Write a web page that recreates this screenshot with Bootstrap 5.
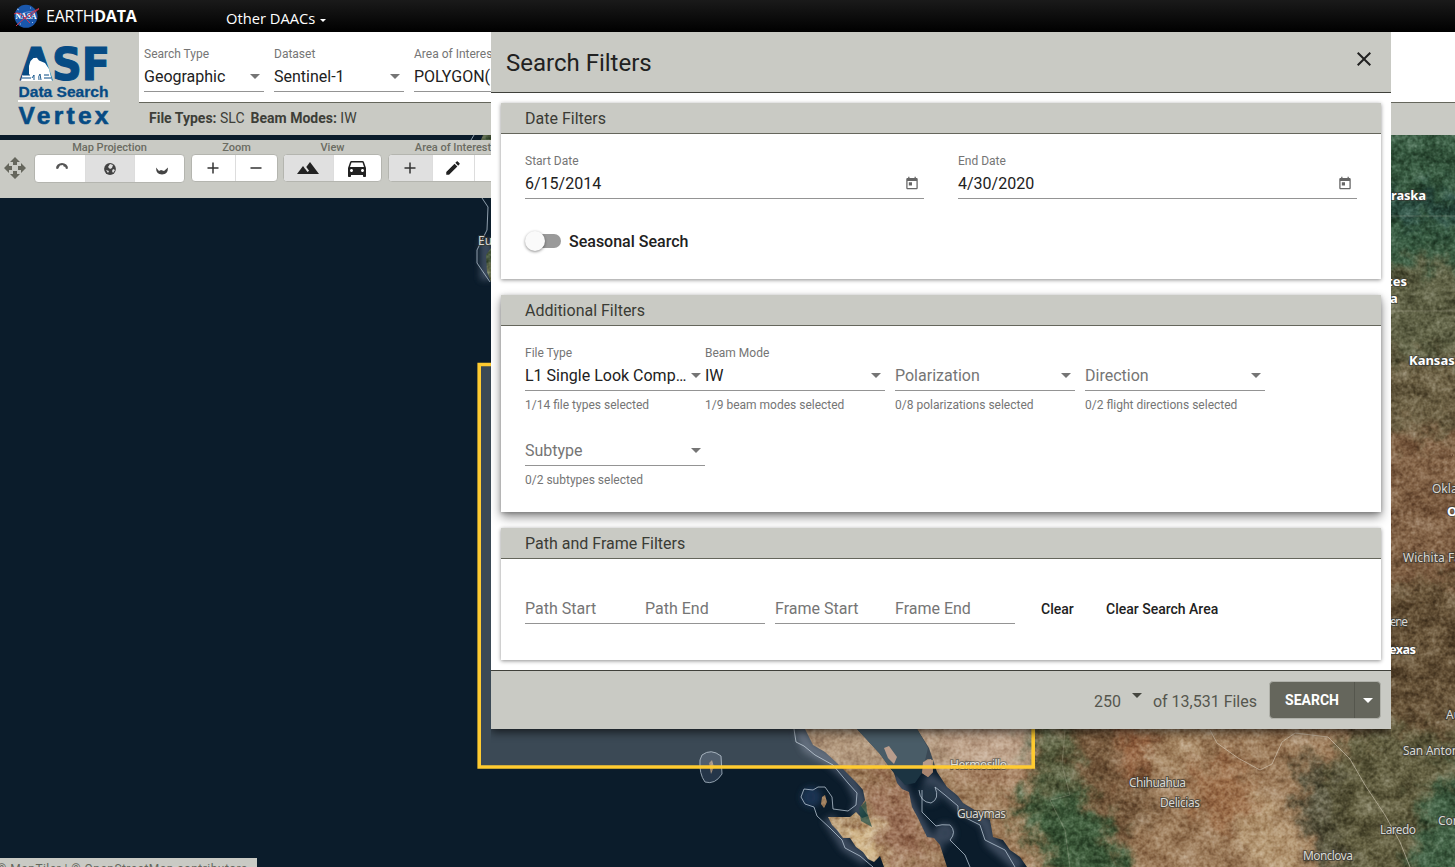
<!DOCTYPE html>
<html lang="en">
<head>
<meta charset="utf-8">
<title>ASF Data Search Vertex</title>
<meta name="viewport" content="width=device-width, initial-scale=1">
<link rel="stylesheet" href="https://cdn.jsdelivr.net/npm/bootstrap@5.3.0/dist/css/bootstrap.min.css">
<style>
:root{--stone:#c9cac4;--olive:#65665c}
body{font-family:Roboto,"Liberation Sans",sans-serif;font-size:16px;color:#212121;height:867px;overflow:hidden;background:#0b1c2b}
.app-shell{height:867px;overflow:hidden}
.topbar{height:32px;background:linear-gradient(#1a1a1a,#000);font-family:"Open Sans",sans-serif;color:#fff}
.brand-name{font-size:16px;line-height:32px;letter-spacing:-.25px;margin-left:7px;font-family:"Open Sans",sans-serif;width:180px}
.daacs{font-size:14.700px;line-height:37px;padding-top:5px}
.head{height:103px;background:var(--stone)}
.logo-box{width:139px}
.search-row{height:71px;background:#fff;border-bottom:1px solid #65665c;padding:13px 0 0 5px}
.summary{font-size:14px;line-height:31px;color:#3d3e38;padding-left:10px}
.fld-label{font-size:12px;line-height:18px;height:16px;color:#757575;white-space:nowrap}
.fld-value{height:31px;line-height:31px;border-bottom:1px solid #949494;white-space:nowrap}
.fld-hint{font-size:12px;line-height:28px;color:#757575;white-space:nowrap}
.w120{width:120px}.w130{width:130px}.w180{width:180px}
.tri{width:0;height:0;border:5px solid transparent;border-top-color:#757575;border-bottom:0;flex:none}
.stage{height:732px}
.map{position:absolute;inset:0;width:1455px;height:732px}
.map text{font-family:"Noto Sans",sans-serif;font-size:12px;fill:#d8d8d4;stroke:#3a3a34;stroke-width:2px;stroke-opacity:.7;paint-order:stroke}
.map .state{font-weight:700;font-size:13px;fill:#fff}
.tools{top:5px;height:58px;background:var(--stone);width:900px}
.tool-title{font-size:11px;line-height:16px;height:14px;font-weight:500;color:#6b6c62;text-align:center}
.tool-group{border:1px solid #b4b5af;border-radius:4px;background:#fff;height:28px;overflow:hidden}
.tool-group>span{display:flex;align-items:center;justify-content:center;border-left:1px solid #ddd;color:#222}
.tool-group>span:first-child{border-left:0}
.tool-group .on{background:#e0e0e0}
.credit{bottom:0;left:0;height:9px;width:257px;background:var(--stone);font-size:12px;line-height:23px;color:#65665c;overflow:hidden;white-space:nowrap;text-indent:-3px;letter-spacing:.45px}
.panel{left:491px;top:32px;width:900px;height:697px;background:#fff;box-shadow:0 3px 9px rgba(0,0,0,.65);clip-path:inset(0 0 -14px 0);z-index:5}
.panel-top{height:61px;background:var(--stone);border-bottom:1px solid #40413b;padding:1px 15px 0;font-size:24px}
.panel-body{height:577px;padding:10px 10px 0}
.sheet{background:#fff;box-shadow:0 1px 4px rgba(0,0,0,.45);margin-bottom:16px}
.sheet-raised{box-shadow:0 5px 10px rgba(0,0,0,.45),0 1px 4px rgba(0,0,0,.25)}
.sheet-title{height:31px;line-height:31px;background:var(--stone);border-bottom:1px solid #65665c;padding-left:24px;color:#3a3b35}
.sheet-body{padding:18px 24px 0}
.panel-foot{height:59px;background:var(--stone);border-top:1px solid #40413b;color:#55564e}
.toggle{width:36px;height:20px;margin-top:-2px}
.toggle i{position:absolute;left:3px;top:3px;width:33px;height:14px;border-radius:7px;background:#9a9a9a}
.toggle b{position:absolute;left:0;top:0;width:20px;height:20px;border-radius:50%;background:#fafafa;box-shadow:0 1px 3px rgba(0,0,0,.45)}
.muted{color:#757575}
.go{height:38px;width:112px;background:var(--olive);border-radius:4px;border:1px solid #b0b1aa;color:#fff;overflow:hidden}
.go-text{width:85px;font-size:14px;font-weight:700;text-align:center;line-height:36px;border-right:1px solid #55564d}
.flat{font-size:14px;font-weight:500;line-height:33px;white-space:nowrap}
</style>
<script src="https://cdn.jsdelivr.net/npm/bootstrap@5.3.0/dist/js/bootstrap.bundle.min.js"></script>
</head>
<body>
<div class="app-shell position-relative">
<nav class="topbar d-flex">
  <svg width="30" height="32" style="margin-left:9px" viewBox="9 0 30 32"><circle cx="26" cy="16.3" r="11.5" fill="#1a57ab"/><path d="M17 9l2 1M32 22l1 1M20 24h1M30 8h1" stroke="#9cc0ee"/><path d="M16 19q7-9 18-7" stroke="#6d9ada" fill="none" stroke-width=".8"/><text x="15.5" y="19.2" font-family="Liberation Serif,serif" font-weight="700" font-size="8.5" textLength="21" lengthAdjust="spacingAndGlyphs" fill="#fff">NASA</text><path d="M16 26q5-5 9-8 7-7 15-10-7 5-11 10M14 14q5-3 10 3l6 6" stroke="#d6354a" stroke-width="1" fill="none"/></svg>
  <span class="brand-name">EARTH<b>DATA</b></span>
  <span class="daacs d-flex align-items-center">Other DAACs <svg width="8" height="6" class="ms-1 mt-1"><path d="M1 1h6L4 4z" fill="#fff"/></svg></span>
</nav>
<header class="head d-flex">
  <div class="logo-box flex-shrink-0">
    <svg width="139" height="103" viewBox="0 32 139 103"><g font-family="DejaVu Sans,sans-serif" font-weight="700" fill="#064b84">
      <text x="20" y="80" font-size="45" stroke="#064b84" stroke-width="1.200" textLength="90" lengthAdjust="spacingAndGlyphs">ASF</text>
      <path d="M21 81l1.500-6H29V66l1.500-5 3-3 3.500 0 2 2.500 6 2.500 4 6 3 12z" fill="#fff"/><path d="M23 75h7M22 78h9M44 75h5M44 78h7" stroke="#064b84" stroke-width="1"/><path d="M34 80v-5l-2 3M39 80q-1-4 1-6l1 6" stroke="#064b84" fill="none" stroke-width=".9"/>
      <g font-family="Liberation Sans,sans-serif"><text x="18.500" y="97" font-size="14.500" stroke="#064b84" stroke-width=".3" textLength="90" lengthAdjust="spacingAndGlyphs">Data Search</text></g>
      <path d="M18 101h92" stroke="#fff" stroke-width="1.800"/>
      <text x="18.500" y="123.500" font-size="24.500" textLength="90" lengthAdjust="spacing" font-family="Liberation Sans,sans-serif" stroke="#064b84" stroke-width=".6">Vertex</text></g></svg>
  </div>
  <div class="flex-grow-1">
    <div class="search-row d-flex">
      <div class="w120 flex-shrink-0" style="margin-right:10px"><div class="fld-label">Search Type</div><div class="fld-value d-flex align-items-center justify-content-between pe-1">Geographic<i class="tri"></i></div></div>
      <div class="w130 flex-shrink-0" style="margin-right:10px"><div class="fld-label">Dataset</div><div class="fld-value d-flex align-items-center justify-content-between pe-1">Sentinel-1<i class="tri"></i></div></div>
      <div class="w180 flex-shrink-0"><div class="fld-label">Area of Interest</div><div class="fld-value overflow-hidden">POLYGON(</div></div>
    </div>
    <div class="summary"><b>File Types:</b> SLC<b style="margin-left:6px">Beam Modes:</b> IW</div>
  </div>
</header>

<main class="stage position-relative">
  <svg class="map" viewBox="0 135 1455 732">
    <defs>
      <filter id="terrain" x="0" y="0" width="1" height="1" color-interpolation-filters="sRGB"><feTurbulence type="fractalNoise" baseFrequency=".045 .06" numOctaves="7" seed="21"/><feColorMatrix values="1.2 .5 0 0 -.42  1.2 .5 0 0 -.42  1.2 .5 0 0 -.42  0 0 0 0 1"/></filter>
      <filter id="grain" x="0" y="0" width="1" height="1" color-interpolation-filters="sRGB"><feTurbulence type="fractalNoise" baseFrequency=".25" numOctaves="3" seed="5"/><feColorMatrix values="1.3 .5 0 0 -.42  1.3 .5 0 0 -.42  1.3 .5 0 0 -.42  0 0 0 0 1"/></filter>
      <filter id="rough" x="-40%" y="-40%" width="180%" height="180%" color-interpolation-filters="sRGB"><feGaussianBlur stdDeviation="9" result="b"/><feTurbulence type="fractalNoise" baseFrequency=".06" numOctaves="5" seed="3" result="n"/><feDisplacementMap in="b" in2="n" scale="45" xChannelSelector="R" yChannelSelector="G"/></filter>
      <filter id="glow" x="-30%" y="-30%" width="160%" height="160%"><feGaussianBlur stdDeviation="3"/></filter>
      <clipPath id="land"><path d="M805 729L813 745 825 752 837 763 846 772 857 783 863 790 865 800 861 806 868 816 862 818 856 812 850 817 828 817 832 825 837 830 843 838 850 838 856 847 863 852 868 859 874 862 880 856 884 867H947L940 845 934 838 927 837 918 818 912 807 909 792 902 789 897 783 894 773 890 768 880 754 857 729ZM884 748L889 746 897 757 894 764 888 758ZM917 729L924 740 929 748 933 760 933 772 928 777 922 773 923 762 928 759 933 760 937 772 947 787 958 796 963 803 978 812 990 820 993 837 1003 840 1010 850 1020 857 1027 867H1455V135H1385V729ZM822 797L825 795 827 802 824 808 821 804ZM709 763L712 760 714 767 711 774ZM486 255L491 248V282L487 272ZM483 135H491V140H481Z"/></clipPath>
    </defs>
    <rect y="135" width="1455" height="732" fill="#0b1c2b"/>
    <g fill="none" stroke="#48566a" stroke-width="12" opacity=".8" filter="url(#glow)"><path d="M800 730L808 748 830 760 850 778 861 800 856 816M828 818L846 846 867 860M895 775L914 815 926 836 940 852M926 778L945 790 961 805 986 823 991 842 1020 867"/><circle cx="811" cy="797" r="4" stroke="#233e62"/><circle cx="930" cy="794" r="5" stroke="#28384a"/><circle cx="945" cy="833" r="4"/><path d="M486 240V280"/></g>
    <g clip-path="url(#land)">
      <rect x="470" y="135" width="985" height="732" fill="#a38361"/>
      <g filter="url(#rough)">
        <path d="M1350 90H1500V280H1350z" fill="#3a5e44"/>
        <path d="M1350 196H1500V220H1350z" fill="#2b4f45"/>
        <path d="M1350 262H1500V365H1350Z" fill="#65674a"/><path d="M1350 360H1500V440H1350Z" fill="#716548"/><path d="M1350 435H1500V590H1350Z" fill="#87674a"/>
        <path d="M1350 580H1500V780H1350Z" fill="#6c583c"/>
        <path d="M1365 730H1500V890H1330L1310 780Z" fill="#676344"/><path d="M1425 790L1500 755V890H1410Z" fill="#456548"/>
        <path d="M1055 750L1085 790 1120 825 1130 890H1060L1035 835 1012 810Z" fill="#42603f"/>
        <path d="M1030 720L1070 720 1080 780 1040 810Z" fill="#5e6444"/>
        <path d="M1070 715H1150V820L1120 840 1085 800Z" fill="#7e6143"/>
        <path d="M1110 720L1140 715 1150 770 1130 790Z" fill="#9d6b48"/><path d="M1180 780L1240 755 1260 800 1220 835Z" fill="#a1744f"/>
        <path d="M1298 755L1335 770 1328 815 1350 867 1325 867 1300 820Z" fill="#5a5741"/>
        <path d="M1150 720L1215 720 1205 765 1160 775Z" fill="#ae906d"/><path d="M1250 790L1280 815 1310 880H1270L1240 840Z" fill="#bca17d"/>
        <path d="M830 810L858 818 880 835 885 880 855 860Z" fill="#dfc9a0"/><path d="M870 775L905 790 940 867H900L870 810Z" fill="#a37a60"/>
        <path d="M925 715H1025V790H965Z" fill="#b39274"/><path d="M480 235h20v60h-20z" fill="#35593d"/><path d="M470 120h30v25h-30z" fill="#35593d"/>
      </g>
      <rect x="470" y="135" width="985" height="732" filter="url(#terrain)" style="mix-blend-mode:soft-light" opacity=".55"/>
      <rect x="470" y="135" width="985" height="732" filter="url(#grain)" style="mix-blend-mode:soft-light" opacity=".5"/>
    </g>
    <path d="M852 729L857 729 880 754 890 768 905 785 915 783 922 773 928 748 917 729Z" fill="#1c3442"/><path d="M884 748L889 746 897 757 894 764 888 758ZM923 762L931 759 933 772 928 777 922 773Z" fill="#a88570"/>
    <path d="M859 808L866 801 867 812 872 827 861 821Z" fill="#245148" opacity=".7"/>
    <g fill="none" stroke="#bccbd8" stroke-width="1" opacity=".75"><path d="M794 729L796 742 804 746 815 755 833 765 848 783 857 793 856 805 848 811 833 809 832 797 825 787 818 787 813 790 804 789 801 797 805 804 814 807 817 816 830 828 842 840 845 848 860 856 873 867M919 790Q920 802 931 803 940 799 935 787L945 795 958 806 958 814 980 825 985 840 1005 850 1015 867M922 790L922 812 936 826Q941 824 950 825 957 832 950 840L965 855 970 867M482 198L488 207 487 230 477 250 477 263 490 282M471 140L474 135"/><path d="M702 755Q711 748 721 756L722 774Q715 785 705 782 699 774 700 760Z" fill="#8192b4" fill-opacity=".3"/></g>
    <g fill="none" stroke="#ddd4c4" stroke-width="1" opacity=".55"><path d="M1210 730L1217 743 1238 758 1260 770 1272 764 1282 742 1295 733 1328 737 1350 759 1365 785 1385 815 1400 842 1410 867"/><path d="M1065 730L1062 765 1070 795 1050 800 1065 830 1070 867M1391 216H1455M1391 311H1455" opacity=".4"/></g>
    <text x="950" y="769" textLength="57">Hermosillo</text>
    <path d="M479.200 364.500H1033.200V767H479.200Z" fill="#fff" fill-opacity=".2" stroke="#ffcb30" stroke-width="3.600"/>
    <text x="1391" y="199.500" class="state" textLength="35">raska</text><text x="1387" y="286" class="state">tes</text><text x="1390" y="303" class="state">a</text><text x="1409" y="365" class="state">Kansas</text>
    <text x="1432" y="493">Oklahoma</text><text x="1447" y="516" class="state">Oklahoma</text><text x="1403" y="562" textLength="70">Wichita Falls</text><text x="1390" y="626" textLength="18">ene</text><text x="1389" y="654" class="state" textLength="27">exas</text>
    <text x="1446" y="719">Austin</text><text x="1403" y="755" textLength="66">San Antonio</text><text x="1438" y="825">Corpus</text><text x="1380" y="834" textLength="36">Laredo</text><text x="1303" y="860" textLength="50">Monclova</text><text x="1129" y="787" textLength="57">Chihuahua</text><text x="1160" y="807" textLength="40">Delicias</text><text x="957" y="818" textLength="49">Guaymas</text><text x="478" y="245">Eureka</text>
  </svg>
  <div class="tools position-absolute start-0 d-flex">
    <svg width="22" height="22" class="flex-shrink-0" style="margin:17px 8px 0 4px" viewBox="0 0 22 22" fill="#65665c"><path d="M11 0l5 5h-3v3H9V5H6zM11 22l5-5h-3v-3H9v3H6zM0 11l5-5v3h3v4H5v3zM22 11l-5-5v3h-3v4h3v3z"/></svg>
    <div style="width:151px;margin-right:6px"><div class="tool-title">Map Projection</div>
      <div class="tool-group d-flex" style="height:29px"><span style="width:50px"><svg width="14" height="14" class="ms-1" viewBox="0 0 14 14"><path d="M1 6.500A6 5.500 0 0 1 13 6.500L11 7 10 4.500 9 5 8 3 5 3.500 3 7z" fill="#555"/></svg></span><span class="on" style="width:50px"><svg width="14" height="14"><circle cx="7" cy="7" r="5.900" fill="#424242"/><path d="M7 2l3 1-1 3-2 1-2-2zM10 7l2 1-2 3-1-2zM3 8l3 1-1 2z" fill="#e0e0e0"/></svg></span><span style="width:50px"><svg width="14" height="14" class="ms-1"><path d="M1 5.500l3 3.500 2-1 3 1 4-3.500Q13 12.500 7 12.500T1 5.500z" fill="#444"/></svg></span></div></div>
    <div style="width:87px;margin-right:6px"><div class="tool-title ps-1">Zoom</div>
      <div class="tool-group d-flex"><span class="w-50"><svg width="12" height="12"><path d="M6 .5v11M.5 6h11" stroke="#333" stroke-width="1.500"/></svg></span><span class="w-50"><svg width="12" height="12"><path d="M.5 6h11" stroke="#333" stroke-width="1.500"/></svg></span></div></div>
    <div style="width:99px;margin-right:6px;margin-left:-1px"><div class="tool-title">View</div>
      <div class="tool-group d-flex"><span class="on w-50"><svg width="24" height="24" viewBox="0 0 24 24" fill="#222"><path d="M14 6l-3.750 5 2.850 3.800-1.600 1.200C9.810 13.750 7 10 7 10l-6 8h22z"/></svg></span><span class="w-50"><svg width="24" height="24" viewBox="0 0 24 24" fill="#222"><path d="M18.920 6.010C18.720 5.420 18.160 5 17.500 5h-11c-.66 0-1.210.42-1.420 1.010L3 12v8c0 .55.45 1 1 1h1c.55 0 1-.45 1-1v-1h12v1c0 .55.45 1 1 1h1c.55 0 1-.45 1-1v-8l-2.080-5.990zM6.500 16c-.83 0-1.500-.67-1.500-1.500S5.670 13 6.500 13s1.500.67 1.500 1.500S7.330 16 6.500 16zm11 0c-.83 0-1.500-.67-1.500-1.500s.67-1.500 1.500-1.500 1.500.67 1.500 1.500-.67 1.500-1.500 1.500zM5 11l1.500-4.500h11L19 11H5z"/></svg></span></div></div>
    <div style="width:130px"><div class="tool-title">Area of Interest</div>
      <div class="tool-group d-flex"><span class="on" style="width:43px"><svg width="12" height="12"><path d="M6 .5v11M.5 6h11" stroke="#333" stroke-width="1.500"/></svg></span><span style="width:43px"><svg width="18" height="18" viewBox="0 0 24 24" fill="#222"><path d="M3 17.250V21h3.750L17.810 9.940l-3.750-3.750zM20.710 7.040c.39-.39.39-1.020 0-1.410l-2.340-2.340c-.39-.39-1.020-.39-1.410 0l-1.830 1.830 3.750 3.750z"/></svg></span><span style="width:43px"><svg width="12" height="12"><path d="M1 1l10 10M11 1L1 11" stroke="#222"/></svg></span></div></div>
  </div>
  <div class="credit position-absolute">© MapTiler | © OpenStreetMap contributors</div>
</main>

<section class="panel position-absolute">
  <div class="panel-top d-flex align-items-center justify-content-between"><span>Search Filters</span><svg width="24" height="24" viewBox="0 0 24 24" fill="#212121" style="margin-top:-8px"><path d="M19 6.410L17.590 5 12 10.590 6.410 5 5 6.410 10.590 12 5 17.590 6.410 19 12 13.410 17.590 19 19 17.590 13.410 12z"/></svg></div>
  <div class="panel-body">
    <div class="sheet" style="height:176px"><div class="sheet-title">Date Filters</div>
      <div class="sheet-body">
        <div class="d-flex" style="gap:34px">
          <div style="width:399px"><div class="fld-label">Start Date</div><div class="fld-value d-flex align-items-center justify-content-between" style="padding-right:5px">6/15/2014<svg width="14" height="14" viewBox="2 0 20 22" fill="#666"><path fill-rule="evenodd" d="M19 3h-1V1h-2v2H8V1H6v2H5c-1.110 0-2 .9-2 2v14c0 1.100.89 2 2 2h14c1.100 0 2-.9 2-2V5c0-1.100-.9-2-2-2zm0 16H5V8h14v11zM7 10h5v5H7z"/></svg></div></div>
          <div style="width:399px"><div class="fld-label">End Date</div><div class="fld-value d-flex align-items-center justify-content-between" style="padding-right:5px">4/30/2020<svg width="14" height="14" viewBox="2 0 20 22" fill="#666"><path fill-rule="evenodd" d="M19 3h-1V1h-2v2H8V1H6v2H5c-1.110 0-2 .9-2 2v14c0 1.100.89 2 2 2h14c1.100 0 2-.9 2-2V5c0-1.100-.9-2-2-2zm0 16H5V8h14v11zM7 10h5v5H7z"/></svg></div></div>
        </div>
        <div class="d-flex align-items-center gap-2" style="margin-top:31px;font-weight:500"><span class="toggle position-relative"><i></i><b></b></span>Seasonal Search</div>
      </div></div>
    <div class="sheet sheet-raised" style="height:217px"><div class="sheet-title">Additional Filters</div>
      <div class="sheet-body">
        <div class="d-flex">
          <div class="w180"><div class="fld-label">File Type</div><div class="fld-value d-flex align-items-center justify-content-between pe-1">L1 Single Look Comp…<i class="tri"></i></div><div class="fld-hint">1/14 file types selected</div></div>
          <div class="w180" style="margin-right:10px"><div class="fld-label">Beam Mode</div><div class="fld-value d-flex align-items-center justify-content-between pe-1">IW<i class="tri"></i></div><div class="fld-hint">1/9 beam modes selected</div></div>
          <div class="w180" style="margin-right:10px"><div class="fld-label">&nbsp;</div><div class="fld-value muted d-flex align-items-center justify-content-between pe-1">Polarization<i class="tri"></i></div><div class="fld-hint">0/8 polarizations selected</div></div>
          <div class="w180"><div class="fld-label">&nbsp;</div><div class="fld-value muted d-flex align-items-center justify-content-between pe-1">Direction<i class="tri"></i></div><div class="fld-hint">0/2 flight directions selected</div></div>
        </div>
        <div class="w180"><div class="fld-label">&nbsp;</div><div class="fld-value muted d-flex align-items-center justify-content-between pe-1">Subtype<i class="tri"></i></div><div class="fld-hint">0/2 subtypes selected</div></div>
      </div></div>
    <div class="sheet" style="height:132px"><div class="sheet-title">Path and Frame Filters</div>
      <div class="sheet-body d-flex" style="padding-top:34px">
        <div class="fld-value muted w120">Path Start</div><div class="fld-value muted w120" style="margin-right:10px">Path End</div><div class="fld-value muted w120">Frame Start</div><div class="fld-value muted w120">Frame End</div>
        <div class="flat" style="margin-left:26px;width:65px">Clear</div><div class="flat">Clear Search Area</div>
      </div></div>
  </div>
  <div class="panel-foot d-flex align-items-center justify-content-end" style="padding-right:10px">
    <span style="margin-right:11px;padding-top:3px">250</span><i class="tri" style="border-top-color:#45463f;margin:0 11px 10px 0"></i><span style="margin-right:12px;padding-top:3px">of 13,531 Files</span>
    <div class="go d-flex"><span class="go-text">SEARCH</span><span class="flex-grow-1 d-flex align-items-center justify-content-center"><i class="tri" style="border-top-color:#fff"></i></span></div>
  </div>
</section>
</div>
</body>
</html>
